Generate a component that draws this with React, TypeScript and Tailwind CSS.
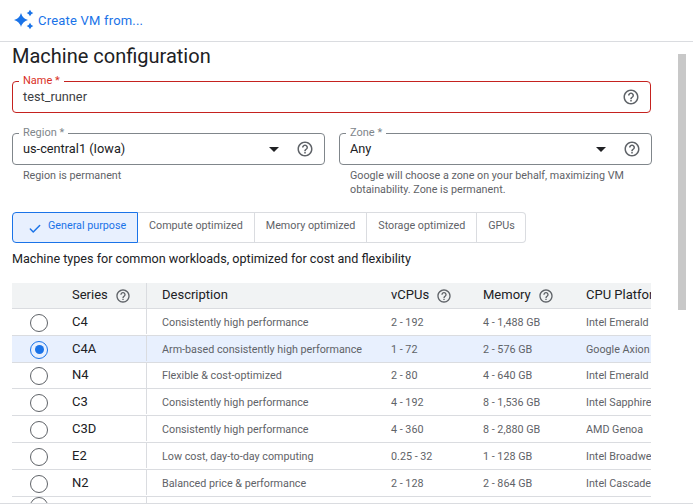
import { Check } from 'lucide-react';

const font = "font-['Roboto',sans-serif]";

const HelpIcon = ({ className = 'h-[18px] w-[18px]' }: { className?: string }) => (
  <svg viewBox="0 0 24 24" className={`${className} shrink-0 fill-[#5f6368]`}>
    <path d="M11 18h2v-2h-2v2zm1-16C6.48 2 2 6.48 2 12s4.48 10 10 10 10-4.48 10-10S17.52 2 12 2zm0 18c-4.41 0-8-3.59-8-8s3.59-8 8-8 8 3.59 8 8-3.59 8-8 8zm0-14c-2.21 0-4 1.79-4 4h2c0-1.1.9-2 2-2s2 .9 2 2c0 2-3 1.75-3 5h2c0-2.25 3-2.5 3-5 0-2.21-1.79-4-4-4z" />
  </svg>
);

const Sparkle = () => (
  <svg viewBox="0 0 24 24" className="h-[24px] w-[24px] shrink-0 fill-[#1a73e8]">
    <path d="M9 4Q10.500 9.500 16 11 10.500 12.500 9 18 7.500 12.500 2 11 7.500 9.500 9 4Z" />
    <path d="M18 .7Q18.800 3.200 21.300 4 18.800 4.800 18 7.300 17.200 4.800 14.700 4 17.200 3.200 18 .7Z" />
    <path d="M18 13.700Q18.800 16.200 21.300 17 18.800 17.800 18 20.300 17.200 17.800 14.700 17 17.200 16.200 18 13.700Z" />
  </svg>
);

const Caret = () => <span className="h-0 w-0 border-x-[5px] border-t-[5px] border-x-transparent border-t-[#202124]" />;

const Field = ({
  label,
  value,
  error,
  select,
}: {
  label: string;
  value: string;
  error?: boolean;
  select?: boolean;
}) => (
  <div
    className={`relative flex h-[32px] items-center rounded-[4px] border pl-[10px] pr-[10px] ${
      error ? 'border-[#c5221f]' : 'border-[#80868b]'
    }`}>
    <span
      className={`absolute -top-[8px] left-[6px] bg-white px-[4px] text-[11px] leading-[14px] ${
        error ? 'text-[#d93025]' : 'text-[#80868b]'
      }`}>
      {label}
    </span>
    <span className={`flex-1 text-[12.75px] ${select ? 'text-[#202124]' : 'text-[#3c4043]'}`}>{value}</span>
    {select && (
      <span className="mr-[17px] flex">
        <Caret />
      </span>
    )}
    <HelpIcon />
  </div>
);

const tabs = ['Compute optimized', 'Memory optimized', 'Storage optimized', 'GPUs'];

const rows = [
  ['C4', 'Consistently high performance', '2 - 192', '4 - 1,488 GB', 'Intel Emerald Rapids'],
  ['C4A', 'Arm-based consistently high performance', '1 - 72', '2 - 576 GB', 'Google Axion'],
  ['N4', 'Flexible & cost-optimized', '2 - 80', '4 - 640 GB', 'Intel Emerald Rapids'],
  ['C3', 'Consistently high performance', '4 - 192', '8 - 1,536 GB', 'Intel Sapphire Rapids'],
  ['C3D', 'Consistently high performance', '4 - 360', '8 - 2,880 GB', 'AMD Genoa'],
  ['E2', 'Low cost, day-to-day computing', '0.25 - 32', '1 - 128 GB', 'Intel Broadwell'],
  ['N2', 'Balanced price & performance', '2 - 128', '2 - 864 GB', 'Intel Cascade Lake'],
];

const gridCols = 'grid grid-cols-[52px_82px_2px_243px_92px_103px_65px]';

const Radio = ({ checked }: { checked?: boolean }) => (
  <span
    className={`flex h-[18px] w-[18px] items-center justify-center rounded-full ${
      checked ? 'border border-[#1a73e8]' : 'border-[1.5px] border-[#5f6368]'
    }`}>
    {checked && <span className="h-[9px] w-[9px] rounded-full bg-[#1a73e8]" />}
  </span>
);

export default function App() {
  return (
    <div className={`relative h-[504px] w-[693px] overflow-hidden bg-white ${font}`}>
      <header className="flex h-[42px] items-center gap-[2px] border-b border-[#dadce0] pl-[12px]">
        <Sparkle />
        <span className="text-[13px] tracking-[0.2px] text-[#1a73e8]">Create VM from...</span>
      </header>

      <main className="w-[651px] pl-[12px]">
        <h1 className="text-[20px] leading-[28px] text-[#202124]">Machine configuration</h1>

        <div className="mt-[11px]">
          <Field label="Name *" value="test_runner" error />
        </div>

        <div className="mt-[20px] flex w-[640px] gap-[14px]">
          <div className="w-[313px]">
            <Field label="Region *" value="us-central1 (Iowa)" select />
            <p className="mt-[4px] pl-[11px] text-[10.75px] leading-[14px] text-[#5f6368]">Region is permanent</p>
          </div>
          <div className="w-[313px]">
            <Field label="Zone *" value="Any" select />
            <p className="mt-[4px] pl-[11px] text-[10.75px] leading-[14px] text-[#5f6368]">
              Google will choose a zone on your behalf, maximizing VM obtainability. Zone is permanent.
            </p>
          </div>
        </div>

        <div className="mt-[15px] flex h-[31px] w-fit text-[10.75px]">
          <div className="flex w-[126px] items-center gap-[6px] rounded-l-[4px] border border-[#1a73e8] bg-[#e8f0fe] pb-[2px] pl-[15px] text-[#1a73e8]">
            <Check className="mt-[4px] h-[14px] w-[14px]" strokeWidth={2.5} />
            General purpose
          </div>
          {tabs.map((tab, i) => (
            <div
              key={tab}
              className={`flex items-center border-y border-r border-[#dadce0] pb-[2px] pl-[11px] ${
                i === tabs.length - 1 ? 'rounded-r-[4px] pr-[10px]' : 'pr-[11px]'
              } text-[#5f6368]`}>
              {tab}
            </div>
          ))}
        </div>

        <p className="mt-[7px] text-[12.6px] leading-[18px] text-[#202124]">
          Machine types for common workloads, optimized for cost and flexibility
        </p>

        <div className="mt-[15px] overflow-hidden">
          <div className={`${gridCols} h-[26px] items-center border-b border-[#dadce0] bg-[#f1f3f4] text-[13px] text-[#202124]`}>
            <span />
            <span className="flex items-center gap-[7px] pl-[8px]">
              <span className="mb-[2px]">Series</span> <HelpIcon className="h-[16px] w-[16px]" />
            </span>
            <span className="h-full w-[1px] bg-[#dadce0]" />
            <span className="mb-[2px] pl-[14px]">Description</span>
            <span className="flex items-center gap-[7px]">
              <span className="mb-[2px]">vCPUs</span> <HelpIcon className="h-[16px] w-[16px]" />
            </span>
            <span className="flex items-center gap-[7px]">
              <span className="mb-[2px]">Memory</span> <HelpIcon className="h-[16px] w-[16px]" />
            </span>
            <span className="mb-[2px] whitespace-nowrap">CPU Platform</span>
          </div>
          {rows.map((row) => {
            const selected = row[0] === 'C4A';
            return (
              <div
                key={row[0]}
                className={`${gridCols} ${
                  row[0] === 'N4' ? 'h-[26px]' : 'h-[27px]'
                } items-center border-b border-[#dadce0] text-[10.75px] text-[#5f6368] ${
                  selected ? 'bg-[#e8f0fe]' : ''
                }`}>
                <span className="flex pl-[18px] pt-[1px]">
                  <Radio checked={selected} />
                </span>
                <span className="mb-[1px] pl-[8px] text-[13px] text-[#202124]">{row[0]}</span>
                <span className="h-[25px] w-[1px] self-start bg-[#dadce0]" />
                <span className="pl-[14px] pt-[2px]">{row[1]}</span>
                <span className="pt-[2px]">{row[2]}</span>
                <span className="pt-[2px]">{row[3]}</span>
                <span className="whitespace-nowrap pt-[2px]">{row[4]}</span>
              </div>
            );
          })}
          <div className={`${gridCols} h-[8px]`}>
            <span className="flex pl-[18px]">
              <Radio />
            </span>
            <span />
            <span className="h-full w-[1px] bg-[#dadce0]" />
          </div>
        </div>
      </main>

      <div className="absolute bottom-0 left-0 h-[1px] w-full bg-[#dadce0]" />
      <div className="absolute left-[678px] top-[54px] h-[256px] w-[8px] bg-[#c8c8c8]" />
    </div>
  );
}
